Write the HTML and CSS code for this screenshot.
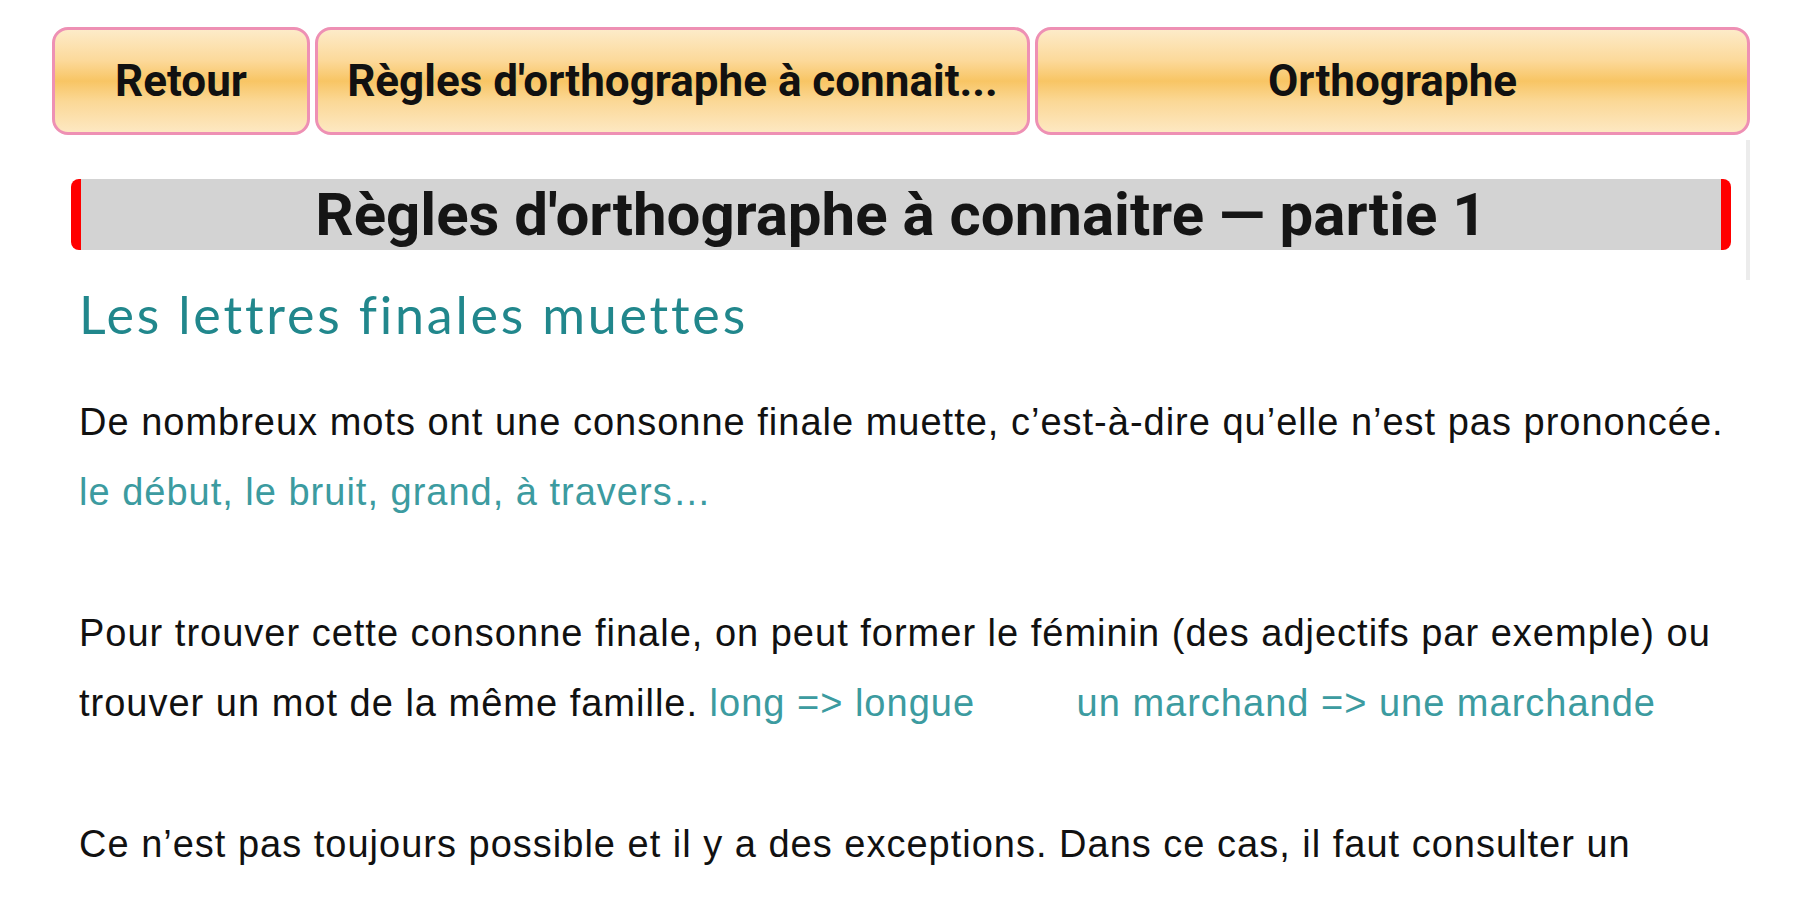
FILE: index.html
```
<!DOCTYPE html>
<html lang="fr">

<head>
    <meta charset="UTF-8">
    <meta name="viewport" content="width=device-width, initial-scale=1.0">
    <title>Règles d'orthographe à connaitre — partie 1</title>
    <link rel="stylesheet" href="styles.css">
</head>

<body>
    <div class="page">
        <nav class="toolbar">
            <a class="btn btn-back" href="#">Retour</a>
            <a class="btn btn-wide" href="#">Règles d'orthographe à connait...</a>
            <a class="btn btn-wide" href="#">Orthographe</a>
        </nav>

        <main class="content">
            <h1 class="title">Règles d'orthographe à connaitre — partie 1</h1>

            <h2 class="section">Les lettres finales muettes</h2>

            <p>
                De nombreux mots ont une consonne finale muette, c’est-à-dire qu’elle n’est pas prononcée.<br>
                <span class="ex">le début, le bruit, grand, à travers…</span>
            </p>

            <p>
                Pour trouver cette consonne finale, on peut former le féminin (des adjectifs par exemple) ou
                trouver un mot de la même famille. <span class="ex">long =&gt; longue</span>
                <span class="ex ex-next">un marchand =&gt; une marchande</span>
            </p>

            <p>
                Ce n’est pas toujours possible et il y a des exceptions. Dans ce cas, il faut consulter un
            </p>
        </main>

        <!-- scroll indicator -->
        <div class="scroll-thumb"></div>
    </div>
</body>

</html>
```

FILE: styles.css
```
html,
body {
    margin: 0;
    padding: 0;
    background: #fff;
    height: 100%;
    overflow: hidden;
}

.page {
    position: relative;
    width: 1698px;
    margin: 0 0 0 52px;
    padding-top: 27px;
}

.toolbar {
    display: flex;
    gap: 5px;
    height: 108px;
}

.btn {
    display: flex;
    align-items: center;
    justify-content: center;
    box-sizing: border-box;
    height: 100%;
    padding: 0 24px;
    border: 3px solid #ee90b4;
    border-radius: 16px;
    background: linear-gradient(to bottom, #fdebc8 0%, #fcd99a 30%, #f8c564 50%, #fbd896 70%, #fde8c2 100%);
    color: #111;
    font: bold 44px "Roboto", "Liberation Sans", sans-serif;
    text-decoration: none;
    white-space: nowrap;
    overflow: hidden;
}

.btn-back {
    flex: 0 0 258px;
}

.btn-wide {
    flex: 1 1 0;
    min-width: 0;
    display: block;
    line-height: 102px;
    text-align: center;
    text-overflow: ellipsis;
}

.content {
    padding: 44px 19px 0 19px;
    font: 38px/70px "Liberation Sans", Arial, sans-serif;
    letter-spacing: 1px;
    color: #111;
}

.title {
    margin: 0;
    height: 71px;
    box-sizing: border-box;
    border-left: 10px solid #f00;
    border-right: 10px solid #f00;
    border-radius: 8px;
    background: #d3d3d3;
    font: bold 60px/71px "Roboto", "Liberation Sans", sans-serif;
    letter-spacing: 0;
    text-align: center;
    color: #151515;
}

.section {
    margin: 34px 0 0 8px;
    font: normal 52px/60px "Lato", "Noto Sans", sans-serif;
    letter-spacing: 2.8px;
    color: #21878c;
}

.content p {
    margin: 43px -10px 0 8px;
}

.content p + p {
    margin-top: 71px;
}

.ex {
    color: #3c9ba0;
}

.ex-next {
    margin-left: 90px;
}

.scroll-thumb {
    position: absolute;
    top: 140px;
    right: 0;
    width: 4px;
    height: 140px;
    background: #ececec;
}
```
